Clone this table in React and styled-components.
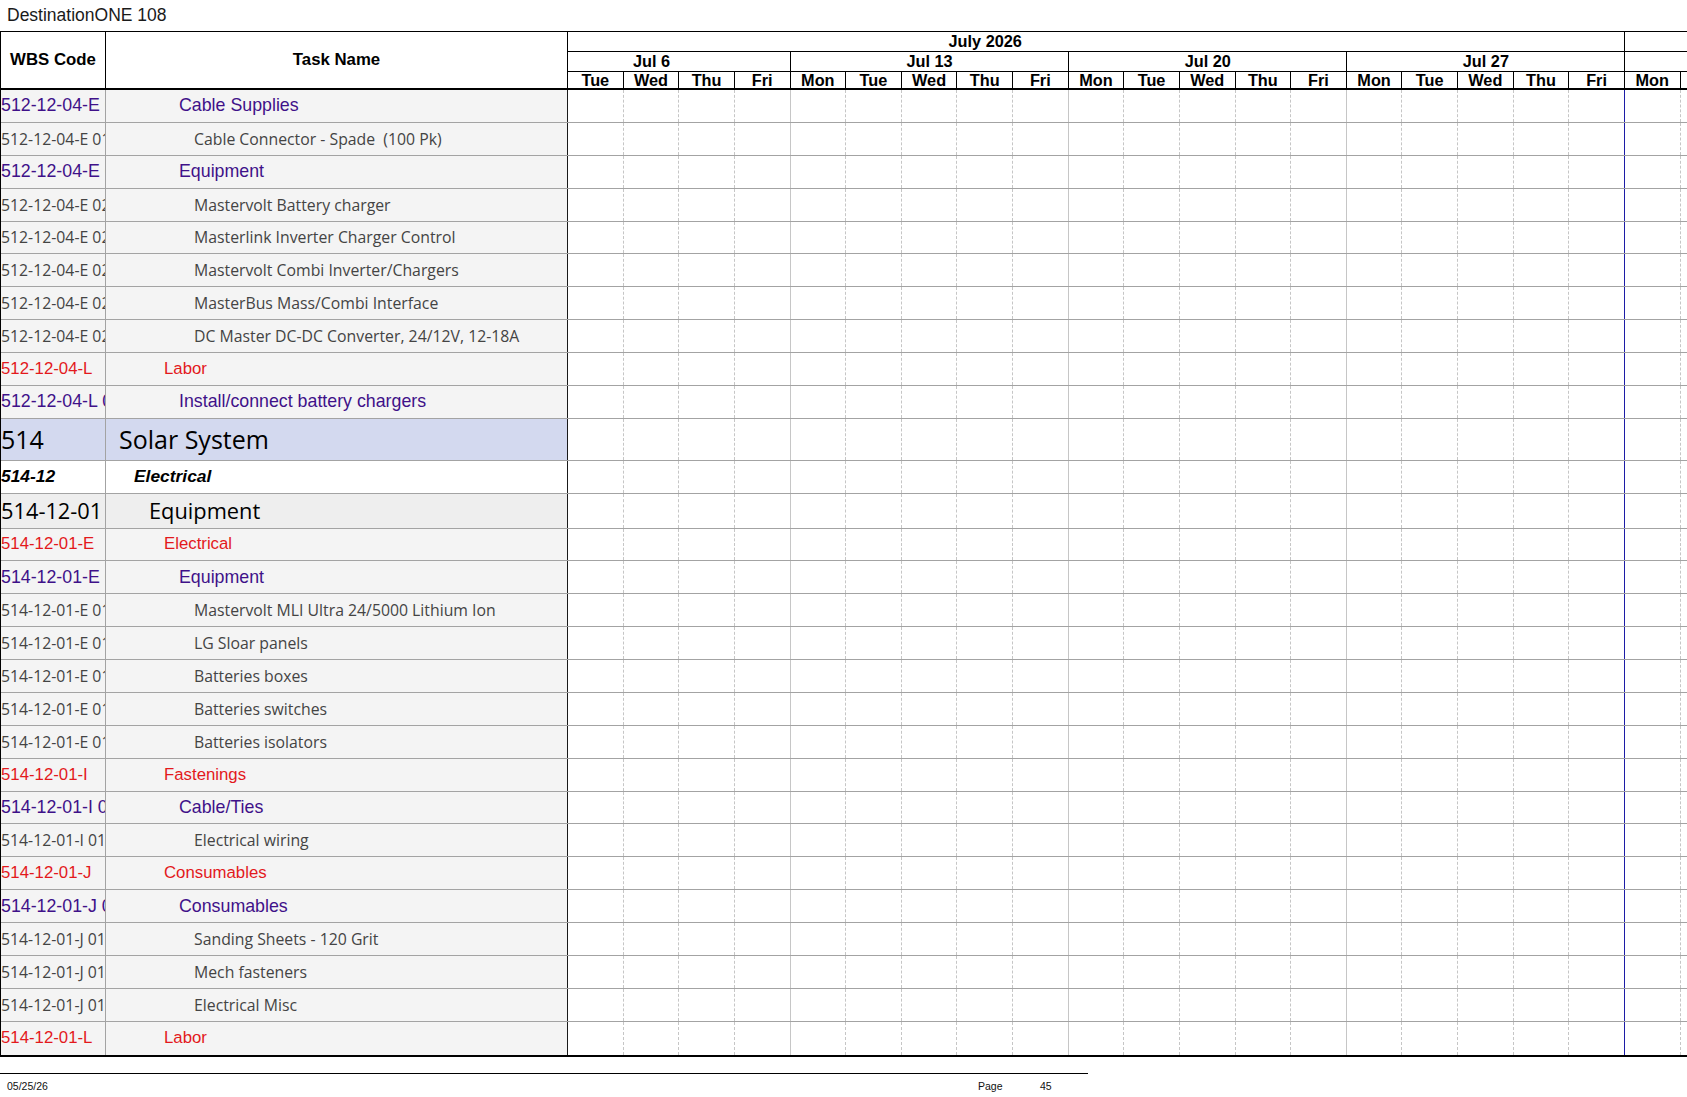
import React from 'react';
import styled, { createGlobalStyle, css } from 'styled-components';

const DAY = 55.63;

const Global = createGlobalStyle`
  html, body { margin: 0; padding: 0; background: #fff; }
  body { width: 1687px; height: 1097px; overflow: hidden; }
  * { box-sizing: border-box; }
`;

const Page = styled.div`
  width: 1687px;
  height: 1097px;
  display: flex;
  flex-direction: column;
  font-family: "Liberation Sans", Arial, sans-serif;
  color: #000;
`;

const Title = styled.div`
  height: 31px;
  padding-left: 7px;
  font-size: 17.5px;
  line-height: 31px;
  color: #1a1a1a;
  white-space: nowrap;
`;

const Table = styled.div`
  display: flex;
  flex-direction: column;
  border-top: 1px solid #000;
  border-left: 1px solid #000;
  border-bottom: 2px solid #000;
`;

const Header = styled.div`
  display: flex;
  height: 58px;
  border-bottom: 2px solid #000;
`;

const HeadCell = styled.div`
  width: ${p => p.$w}px;
  flex: none;
  display: flex;
  align-items: center;
  justify-content: center;
  border-right: 1px solid #000;
  font-weight: bold;
  font-size: 16.8px;
`;

const TimeHead = styled.div`
  flex: 1;
  display: flex;
  flex-direction: column;
  min-width: 0;
`;

const HeadBand = styled.div`
  display: flex;
  height: ${p => p.$h}px;
  border-bottom: ${p => (p.$last ? 'none' : '1px solid #000')};
`;

const BandCell = styled.div`
  flex: ${p => (p.$cols ? 'none' : '1')};
  width: ${p => (p.$cols ? `${p.$cols * DAY}px` : 'auto')};
  border-right: ${p => (p.$noBorder ? 'none' : '1px solid #000')};
  overflow: hidden;
  white-space: nowrap;
  font-weight: bold;
  font-size: 16.3px;
  line-height: ${p => p.$lh}px;
`;

const BandLabel = styled.span`
  display: block;
  width: ${p => p.$span * DAY}px;
  margin-left: ${p => -p.$offset * DAY}px;
  text-align: center;
`;

const Row = styled.div`
  display: flex;
  height: ${p => p.$h}px;
  border-bottom: 1px solid #a3a3a3;
  &:last-child { border-bottom: none; }
`;

const kindStyles = {
  purple: css`
    font-family: "Liberation Sans", Arial, sans-serif;
    font-size: 17.8px;
    color: #3f1189;
  `,
  red: css`
    font-family: "Liberation Sans", Arial, sans-serif;
    font-size: 16.8px;
    color: #e3191c;
  `,
  item: css`
    font-family: "Open Sans", "Noto Sans", sans-serif;
    font-size: 15.8px;
    color: #444444;
  `,
  solar: css`
    font-family: "Open Sans", "Noto Sans", sans-serif;
    font-size: 25px;
    color: #000;
  `,
  section: css`
    font-family: "Liberation Sans", Arial, sans-serif;
    font-size: 17.4px;
    font-weight: bold;
    font-style: italic;
    color: #000;
  `,
  equip: css`
    font-family: "Open Sans", "Noto Sans", sans-serif;
    font-size: 21.8px;
    color: #000;
  `,
};

const rowBg = {
  purple: '#f4f4f4',
  red: '#f4f4f4',
  item: '#f4f4f4',
  solar: '#d3d9ef',
  section: '#ffffff',
  equip: '#eeeeee',
};

const WbsCell = styled.div`
  width: 105px;
  flex: none;
  display: flex;
  align-items: center;
  overflow: hidden;
  white-space: nowrap;
  background: ${p => rowBg[p.$kind]};
  border-right: 1px solid #a3a3a3;
  ${p => kindStyles[p.$kind]};
`;

const TaskCell = styled.div`
  width: 462px;
  flex: none;
  display: flex;
  align-items: center;
  overflow: hidden;
  white-space: pre;
  padding-left: ${p => 13 + 15 * p.$level}px;
  background: ${p => rowBg[p.$kind]};
  border-right: 1px solid #1a1a1a;
  ${p => kindStyles[p.$kind]};
`;

const TimeCells = styled.div`
  flex: 1;
  min-width: 0;
  display: grid;
  grid-template-columns: repeat(20, ${DAY}px) 1fr;
`;

const lineStyle = {
  dash: '1px dashed #c6c6c6',
  week: '1px solid #c6c6c6',
  month: '1px solid #1c1ca6',
  none: 'none',
};

const Slot = styled.div`
  border-right: ${p => lineStyle[p.$line]};
`;

const DayHead = styled.div`
  width: ${p => (p.$stub ? 'auto' : `${DAY}px`)};
  flex: ${p => (p.$stub ? '1' : 'none')};
  border-right: ${p => (p.$stub ? 'none' : '1px solid #000')};
  text-align: center;
  font-weight: bold;
  font-size: 16.3px;
  line-height: 16px;
  white-space: nowrap;
`;

const Footer = styled.div`
  margin-top: 16px;
  width: 1088px;
  border-top: 1px solid #000;
  display: flex;
  padding: 6px 0 0 7px;
  font-size: 10.5px;
  line-height: 12px;
  color: #111;
`;

const FootDate = styled.div`
  flex: 1;
`;

const FootLabel = styled.div`
  width: ${p => p.$w}px;
  flex: none;
`;

const lineFor = i => {
  if (i === 18) return 'month';
  if (i === 3 || i === 8 || i === 13) return 'week';
  if (i === 20) return 'none';
  return 'dash';
};

const days = ['Tue', 'Wed', 'Thu', 'Fri', 'Mon', 'Tue', 'Wed', 'Thu', 'Fri', 'Mon', 'Tue', 'Wed', 'Thu', 'Fri', 'Mon', 'Tue', 'Wed', 'Thu', 'Fri', 'Mon'];

const weeks = [
  { label: 'Jul 6', cols: 4, span: 5, offset: 1 },
  { label: 'Jul 13', cols: 5, span: 5, offset: 0 },
  { label: 'Jul 20', cols: 5, span: 5, offset: 0 },
  { label: 'Jul 27', cols: 5, span: 5, offset: 0 },
];

const levels = { solar: 0, section: 1, equip: 2, red: 3, purple: 4, item: 5 };
const heights = { solar: 42, section: 33.3, equip: 34.5 };

const rows = [
  ['purple', '512-12-04-E 01', 'Cable Supplies'],
  ['item', '512-12-04-E 01 01', 'Cable Connector - Spade  (100 Pk)'],
  ['purple', '512-12-04-E 02', 'Equipment'],
  ['item', '512-12-04-E 02 01', 'Mastervolt Battery charger'],
  ['item', '512-12-04-E 02 02', 'Masterlink Inverter Charger Control'],
  ['item', '512-12-04-E 02 03', 'Mastervolt Combi Inverter/Chargers'],
  ['item', '512-12-04-E 02 04', 'MasterBus Mass/Combi Interface'],
  ['item', '512-12-04-E 02 05', 'DC Master DC-DC Converter, 24/12V, 12-18A'],
  ['red', '512-12-04-L', 'Labor'],
  ['purple', '512-12-04-L 01', 'Install/connect battery chargers'],
  ['solar', '514', 'Solar System'],
  ['section', '514-12', 'Electrical'],
  ['equip', '514-12-01', 'Equipment'],
  ['red', '514-12-01-E', 'Electrical'],
  ['purple', '514-12-01-E 01', 'Equipment'],
  ['item', '514-12-01-E 01 01', 'Mastervolt MLI Ultra 24/5000 Lithium Ion'],
  ['item', '514-12-01-E 01 02', 'LG Sloar panels'],
  ['item', '514-12-01-E 01 03', 'Batteries boxes'],
  ['item', '514-12-01-E 01 04', 'Batteries switches'],
  ['item', '514-12-01-E 01 05', 'Batteries isolators'],
  ['red', '514-12-01-I', 'Fastenings'],
  ['purple', '514-12-01-I 01', 'Cable/Ties'],
  ['item', '514-12-01-I 01 01', 'Electrical wiring'],
  ['red', '514-12-01-J', 'Consumables'],
  ['purple', '514-12-01-J 01', 'Consumables'],
  ['item', '514-12-01-J 01 01', 'Sanding Sheets - 120 Grit'],
  ['item', '514-12-01-J 01 02', 'Mech fasteners'],
  ['item', '514-12-01-J 01 03', 'Electrical Misc'],
  ['red', '514-12-01-L', 'Labor'],
];

const slots = Array.from({ length: 21 }, (_, i) => lineFor(i));

export default function App() {
  return (
    <Page>
      <Global />
      <Title>DestinationONE 108</Title>
      <Table>
        <Header>
          <HeadCell $w={105}>WBS Code</HeadCell>
          <HeadCell $w={462}>Task Name</HeadCell>
          <TimeHead>
            <HeadBand $h={20}>
              <BandCell $cols={19} $lh={18}>
                <BandLabel $span={23} $offset={4}>July 2026</BandLabel>
              </BandCell>
              <BandCell $noBorder $lh={18} />
            </HeadBand>
            <HeadBand $h={20}>
              {weeks.map(w => (
                <BandCell key={w.label} $cols={w.cols} $lh={18}>
                  <BandLabel $span={w.span} $offset={w.offset}>{w.label}</BandLabel>
                </BandCell>
              ))}
              <BandCell $noBorder $lh={18} />
            </HeadBand>
            <HeadBand $h={16} $last>
              {days.map((d, i) => (
                <DayHead key={i}>{d}</DayHead>
              ))}
              <DayHead $stub />
            </HeadBand>
          </TimeHead>
        </Header>
        {rows.map(([kind, code, name], idx) => (
          <Row key={idx} $h={heights[kind] || 32.88}>
            <WbsCell $kind={kind}>{code}</WbsCell>
            <TaskCell $kind={kind} $level={levels[kind]}>{name}</TaskCell>
            <TimeCells>
              {slots.map((l, i) => (
                <Slot key={i} $line={l} />
              ))}
            </TimeCells>
          </Row>
        ))}
      </Table>
      <Footer>
        <FootDate>05/25/26</FootDate>
        <FootLabel $w={62}>Page</FootLabel>
        <FootLabel $w={48}>45</FootLabel>
      </Footer>
    </Page>
  );
}
